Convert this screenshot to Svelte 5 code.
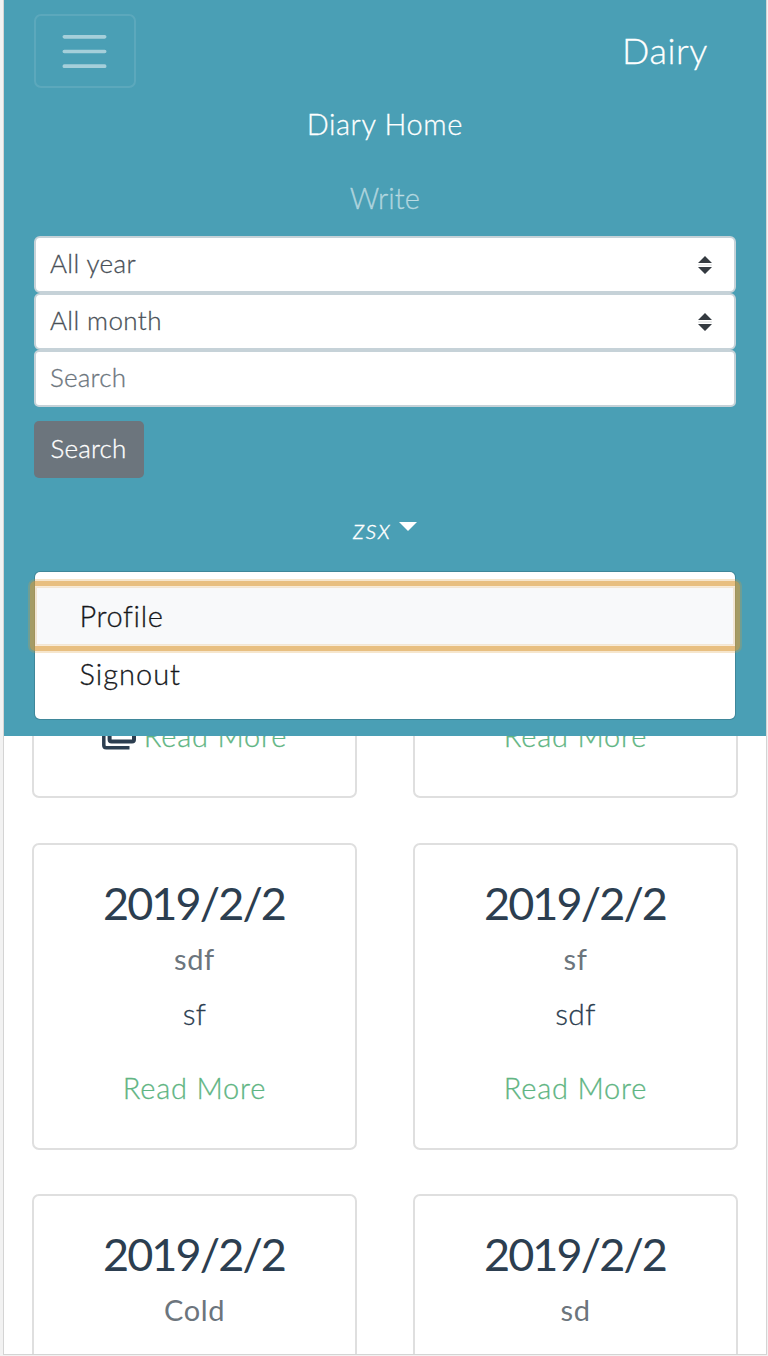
<script>
  const cards = [
    { date: '2019/2/2', title: 'sdf', body: 'sdf', icon: true },
    { date: '2019/2/2', title: 'sd', body: 'sdf' },
    { date: '2019/2/2', title: 'sdf', body: 'sf' },
    { date: '2019/2/2', title: 'sf', body: 'sdf' },
    { date: '2019/2/2', title: 'Cold', body: 'sdf' },
    { date: '2019/2/2', title: 'sd', body: 'sdf' }
  ];
  const filters = ['All year', 'All month'];
</script>

<div class="page">
  <nav>
    <div class="top">
      <button class="toggler" aria-label="Toggle navigation">
        <svg width="55" height="55" viewBox="0 0 30 30">
          <path d="M4 7h22M4 15h22M4 23h22" stroke="#fff" stroke-opacity=".5" stroke-width="2" stroke-linecap="round" />
        </svg>
      </button>
      <span class="brand">Dairy</span>
    </div>
    <div class="link home">Diary Home</div>
    <div class="link write">Write</div>
    <form>
      {#each filters as f}
        <div class="field select">
          <span>{f}</span>
          <svg width="14" height="18" viewBox="0 0 14 18">
            <path d="M0 7L7 0l7 7zM0 11l7 7 7-7z" fill="#343a40" />
            <path d="M0 9h14" stroke="#ced0d2" stroke-width=".8" />
          </svg>
        </div>
      {/each}
      <div class="field input"><span>Search</span></div>
      <button class="btn" type="button">Search</button>
    </form>
    <div class="user"><em>zsx</em><i></i></div>
    <div class="menu">
      <div class="item active"><span>Profile</span></div>
      <div class="item signout"><span>Signout</span></div>
    </div>
  </nav>
  <main>
    {#each cards as c}
      <article>
        <h4>{c.date}</h4>
        <h6>{c.title}</h6>
        <p>{c.body}</p>
        <div class="more">
          {#if c.icon}
            <svg width="34" height="36" viewBox="0 0 34 36" fill="none" stroke="#2c3e50">
              <rect x="7.6" y="3" width="24.4" height="24.6" rx="2" stroke-width="4" />
              <path d="M1.8 7v24.2q0 2.5 2.5 2.5H27.5" stroke-width="3.5" />
            </svg>
          {/if}
          <a href="#more">Read More</a>
        </div>
      </article>
    {/each}
  </main>
</div>

<style>
  :global(body) {
    background: #f2f2f2;
  }
  .page {
    box-sizing: border-box;
    width: 764px;
    height: 1355px;
    margin-left: 3px;
    border: 1px solid #d4d4d4;
    border-top: 0;
    background: #fff;
    overflow: hidden;
    font: 300 29px/44px Lato, sans-serif;
    letter-spacing: 0.6px;
    -webkit-text-stroke: 0.3px currentColor;
    color: #2c3e50;
  }
  nav {
    box-sizing: border-box;
    position: relative;
    z-index: 1;
    height: 736px;
    padding: 14px 30px 0 29.5px;
    background: #4a9fb5;
    color: #fff;
  }
  .top {
    display: flex;
    justify-content: space-between;
    height: 72px;
  }
  .toggler {
    display: flex;
    align-items: center;
    justify-content: center;
    box-sizing: border-box;
    width: 102px;
    height: 74px;
    padding: 1px 0 0;
    border: 2px solid rgba(255, 255, 255, 0.1);
    border-radius: 7px;
    background: none;
  }
  .brand {
    margin-right: 28px;
    font-size: 36px;
    line-height: 72px;
  }
  .link {
    height: 74px;
    line-height: 76px;
    text-align: center;
  }
  .write {
    color: rgba(255, 255, 255, 0.5);
    letter-spacing: 0;
  }
  form {
    padding-top: 2px;
  }
  .field {
    display: flex;
    align-items: center;
    justify-content: space-between;
    box-sizing: border-box;
    width: 702px;
    height: 57px;
    padding: 0 22px 0 14.5px;
    border: 2px solid #c6d2d8;
    border-radius: 6px;
    background: #fff;
    color: #495057;
    font-size: 26px;
    letter-spacing: 0.4px;
  }
  .field span {
    padding-bottom: 4px;
  }
  .field.input {
    border-radius: 5px;
    color: #6c757d;
    letter-spacing: 0.2px;
  }
  .btn {
    display: block;
    width: 110px;
    height: 57px;
    margin-top: 14px;
    padding: 0 0 3px;
    border: 0;
    border-radius: 5px;
    background: #6c757d;
    color: #fff;
    font: inherit;
    font-size: 26px;
    letter-spacing: 0.2px;
  }
  .user {
    display: flex;
    justify-content: center;
    margin-top: 29px;
    height: 44px;
    line-height: 43px;
    font-size: 28px;
    letter-spacing: 1.3px;
  }
  .user i {
    align-self: flex-start;
    margin: 15px 0 0 7px;
    border: 9.5px solid transparent;
    border-top-color: #fff;
    border-bottom: 0;
  }
  .menu {
    box-sizing: border-box;
    width: 702px;
    height: 149px;
    margin: 20px 0 0 0.5px;
    padding: 15px 0;
    border: 1px solid rgba(0, 0, 0, 0.15);
    border-radius: 6px;
    background: #fff;
    background-clip: padding-box;
    color: #16181b;
  }
  .item {
    position: relative;
    height: 58px;
    padding-left: 44.5px;
    line-height: 57px;
  }
  .signout {
    letter-spacing: 1px;
  }
  .active {
    background: #f8f9fa;
  }
  .active::after {
    content: '';
    position: absolute;
    inset: -6px -5px;
    border: 5px solid rgba(218, 154, 54, 0.63);
    border-radius: 5px;
    box-shadow: 0 0 0 2px rgba(218, 154, 54, 0.25), inset 0 0 0 2px rgba(218, 154, 54, 0.2);
  }
  main {
    display: grid;
    grid-template-columns: 325px 325px;
    grid-auto-rows: 307px;
    gap: 44.5px 56px;
    margin: -245px 0 0 28px;
  }
  article {
    box-sizing: border-box;
    padding-top: 28px;
    border: 2px solid #dfdfdf;
    border-radius: 7px;
    text-align: center;
  }
  h4 {
    margin: 0 0 0 -1px;
    font-size: 45px;
    font-weight: 400;
    line-height: 61px;
    letter-spacing: -1.9px;
    -webkit-text-stroke: 0;
  }
  h6 {
    margin: 3px 0 0;
    font-size: 29px;
    font-weight: 400;
    line-height: 44px;
    color: #6c757d;
    -webkit-text-stroke: 0;
  }
  p {
    margin: 10px 0 0;
    font-size: 30px;
    letter-spacing: 0.3px;
  }
  .more {
    display: flex;
    justify-content: center;
    gap: 8px;
    margin-top: 31px;
    letter-spacing: 0.8px;
  }
  a {
    color: #5fb583;
    text-decoration: none;
  }
</style>
